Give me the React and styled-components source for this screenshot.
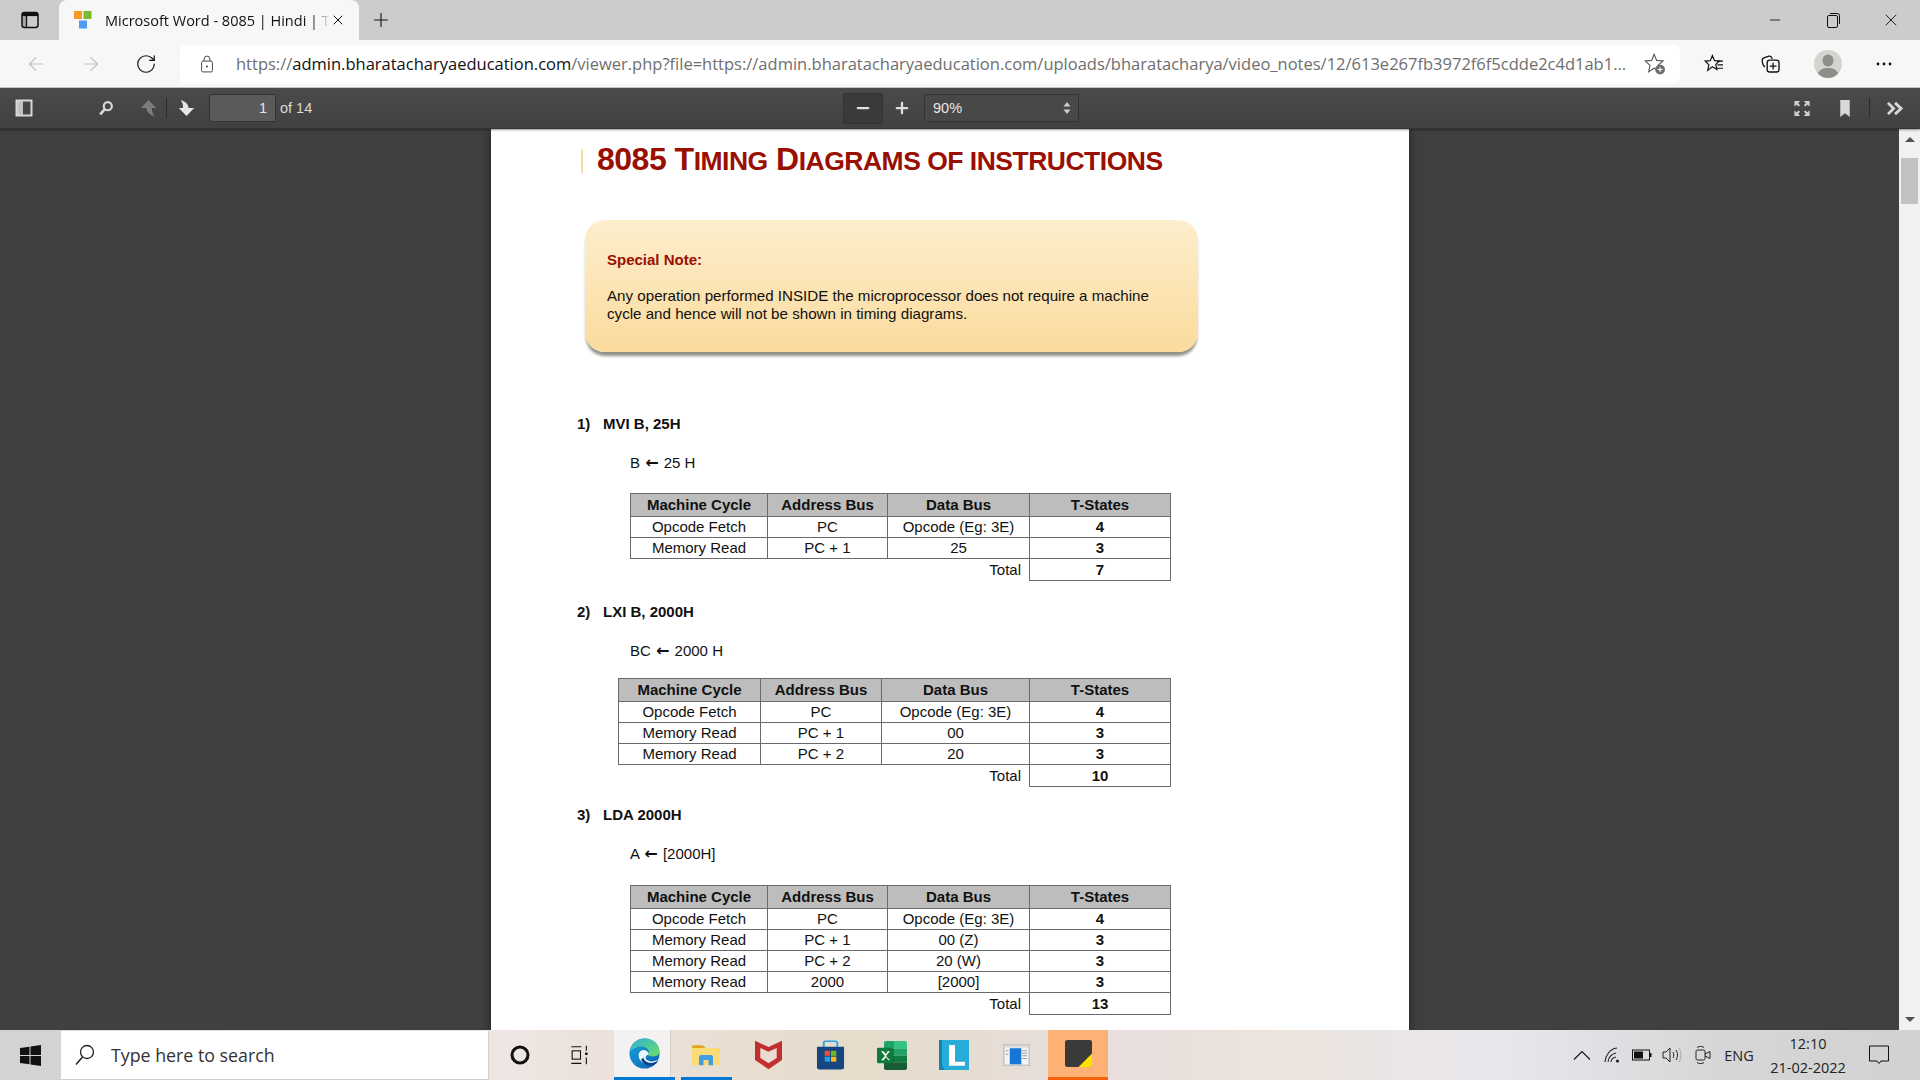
import styled, { createGlobalStyle } from "styled-components"
import { ArrowLeft, ArrowRight, RotateCw, Plus, X, Minus } from "lucide-react"

const sections = [
  {
    num: "1)", name: "MVI B, 25H", left: "B", right: "25 H", top: 63, formulaGap: 21, indent: 53,
    cols: [137, 120, 142, 141],
    rows: [
      ["Opcode Fetch", "PC", "Opcode (Eg: 3E)", "4"],
      ["Memory Read", "PC + 1", "25", "3"],
    ],
    total: "7",
  },
  {
    num: "2)", name: "LXI B, 2000H", left: "BC", right: "2000 H", top: 22, formulaGap: 18, indent: 41,
    cols: [142, 121, 148, 141],
    rows: [
      ["Opcode Fetch", "PC", "Opcode (Eg: 3E)", "4"],
      ["Memory Read", "PC + 1", "00", "3"],
      ["Memory Read", "PC + 2", "20", "3"],
    ],
    total: "10",
  },
  {
    num: "3)", name: "LDA 2000H", left: "A", right: "[2000H]", top: 19, formulaGap: 22, indent: 53,
    cols: [137, 120, 142, 141],
    rows: [
      ["Opcode Fetch", "PC", "Opcode (Eg: 3E)", "4"],
      ["Memory Read", "PC + 1", "00 (Z)", "3"],
      ["Memory Read", "PC + 2", "20 (W)", "3"],
      ["Memory Read", "2000", "[2000]", "3"],
    ],
    total: "13",
  },
]

const Line = ({ d, w = 1.4 }) => <path d={d} fill="none" stroke="currentColor" strokeWidth={w} />

const Favicon = () => (
  <svg width="20" height="20" viewBox="0 0 20 20">
    <rect x="1" y="1" width="8" height="8" fill="#f79a1f" />
    <rect x="10.5" y="1" width="8" height="8" fill="#7cbb2c" />
    <rect x="6" y="10.5" width="8" height="8" fill="#4d9cf0" />
  </svg>
)

const TabsIcon = () => (
  <svg width="20" height="20" viewBox="0 0 20 20">
    <rect x="2" y="2.5" width="16" height="15" rx="2.5" fill="none" stroke="#111" strokeWidth="1.5" />
    <rect x="2" y="2.5" width="16" height="3.6" fill="#111" />
    <rect x="2" y="2.5" width="4.5" height="15" rx="1.5" fill="#111" opacity=".2" />
    <path d="M6.5 6v11" stroke="#111" strokeWidth="1.3" />
  </svg>
)

const LockIcon = () => (
  <svg width="18" height="20" viewBox="0 0 18 24" color="#4a4a4a">
    <rect x="2.5" y="8.5" width="13" height="13" rx="1.5" fill="none" stroke="currentColor" strokeWidth="1.2" />
    <Line d="M5.5 8.5V6a3.5 3.5 0 0 1 7 0v2.5" w={1.2} />
    <circle cx="9" cy="15" r="1.2" fill="currentColor" />
  </svg>
)

const StarAdd = () => (
  <svg width="24" height="24" viewBox="0 0 26 26" color="#555">
    <Line d="M12 2.5l2.8 6.6 7 .6-5.3 4.6 1.6 6.9-6.1-3.6-5.900 3.900 1.500-7L2.500 9.700l7-.6z" w={1.2} />
    <circle cx="18.500" cy="19" r="5.300" fill="#6e6e6e" />
    <path d="M18.500 16.400v5.200M15.900 19h5.200" stroke="#fff" strokeWidth="1.2" />
  </svg>
)

const FavsIcon = () => (
  <svg width="23" height="22" viewBox="0 0 26 26" color="#111">
    <Line d="M10.500 3l2.500 6 6 .5-4.500 4 1.400 6-5.400-3.200L5 20.500l1.400-6.500L2 9.500l6-.5z" w={1.4} />
    <Line d="M16 9.500h7M16.500 14h6.500M16 18h7" w={1.4} />
  </svg>
)

const CollectionsIcon = () => (
  <svg width="22" height="22" viewBox="0 0 26 26" color="#111">
    <Line d="M6 16.500c-1.500-.6-2.600-3-3.200-5.500-.5-2.300-.3-4.500 1.700-5.300l6-2c2-.5 3.300 1 4 3" w={1.5} />
    <rect x="8.500" y="8.500" width="14" height="14" rx="3" fill="#f7f7f7" stroke="currentColor" strokeWidth="1.6" />
    <Line d="M15.500 11.500v8M11.500 15.500h8" w={1.500} />
  </svg>
)

const Avatar = () => (
  <svg width="28" height="28" viewBox="0 0 28 28">
    <circle cx="14" cy="14" r="14" fill="#d4d3cf" />
    <ellipse cx="14" cy="10.500" rx="5.500" ry="6" fill="#8e8d8a" />
    <path d="M4 23.500c1.500-4 5-5.500 10-5.500s8.500 1.500 10 5.500c-2.500 3-6 4.500-10 4.500s-7.500-1.500-10-4.500z" fill="#8e8d8a" />
  </svg>
)

const MoreDots = () => (
  <svg width="18" height="6" viewBox="0 0 18 6" fill="#111">
    <circle cx="3" cy="3" r="1.400" />
    <circle cx="9" cy="3" r="1.400" />
    <circle cx="15" cy="3" r="1.400" />
  </svg>
)

const RestoreIcon = () => (
  <svg width="16" height="18" viewBox="0 0 16 18" color="#111">
    <rect x="2.500" y="4.500" width="10" height="12" rx="1.500" fill="none" stroke="currentColor" />
    <Line d="M5 2.500h7.500a2 2 0 0 1 2 2V13" w={1} />
  </svg>
)

const SidebarToggle = () => (
  <svg width="18" height="18" viewBox="0 0 18 18" color="#d8d8d8">
    <rect x="1.500" y="1.500" width="15" height="15" fill="none" stroke="currentColor" strokeWidth="2" />
    <rect x="2" y="2" width="6" height="14" fill="currentColor" opacity=".85" />
  </svg>
)

const SearchGlass = () => (
  <svg width="18" height="18" viewBox="0 0 18 20" color="#d8d8d8">
    <circle cx="11" cy="8" r="4.500" fill="none" stroke="currentColor" strokeWidth="2.400" />
    <path d="M7.500 11.500L2.500 17" stroke="currentColor" strokeWidth="3" />
  </svg>
)

const PageArrow = ({ up, dim }) => (
  <svg width="19" height="18" viewBox="0 0 20 20" color={dim ? "#7d7d7d" : "#e6e6e6"} transform={up ? "" : "rotate(180)"}>
    <path d="M10 1l8.500 9H14c-.5 3 .3 6 2.500 9-4-1-8-3.500-9-9H1.500z" fill="currentColor" />
  </svg>
)

const FullscreenIcon = () => (
  <svg width="18" height="19" viewBox="0 0 18 20" fill="#cfcfcf">
    <path d="M1 2h6L5 4.500l2 2L5.500 8 3.500 6 1 8zM17 2h-6l2 2.500-2 2L12.500 8l2-2L17 8zM1 18h6l-2-2.500 2-2L5.500 12l-2 2L1 12zM17 18h-6l2-2.500-2-2 1.500-1.500 2 2L17 12z" />
  </svg>
)

const BookmarkIcon = () => (
  <svg width="14" height="19" viewBox="0 0 14 20">
    <path d="M2 1h10v18l-5-4-5 4z" fill="#d8d8d8" />
  </svg>
)

const ChevronsIcon = () => (
  <svg width="20" height="15" viewBox="0 0 20 16" color="#d8d8d8">
    <Line d="M2.500 2l6 6-6 6M10 2l6.500 6-6.500 6" w={3} />
  </svg>
)

const SelectArrows = () => (
  <svg width="8" height="12" viewBox="0 0 8 12" fill="#cfcfcf">
    <path d="M4 0l3.500 4.500h-7zM4 12L.5 7.500h7z" />
  </svg>
)

const WindowsLogo = () => (
  <svg width="21" height="21" viewBox="0 0 21 21" fill="#111">
    <path d="M0 3l9.500-1.300V10H0zM10.500 1.500L21 0v10H10.500zM0 11h9.500v8.300L0 18zM10.500 11H21v10l-10.500-1.500z" />
  </svg>
)

const SearchRing = () => (
  <svg width="22" height="22" viewBox="0 0 22 22" color="#222">
    <circle cx="13" cy="8" r="6.500" fill="none" stroke="currentColor" strokeWidth="1.300" />
    <path d="M8.500 13L2 20.500" stroke="currentColor" strokeWidth="1.500" />
  </svg>
)

const CortanaIcon = () => (
  <svg width="22" height="22" viewBox="0 0 22 22">
    <circle cx="11" cy="11" r="8" fill="none" stroke="#111" strokeWidth="3" />
  </svg>
)

const TaskViewIcon = () => (
  <svg width="21" height="20" viewBox="0 0 24 24" color="#111">
    <Line d="M1 2h12M1 22h12M19 1v6M19 15v8" w={1.300} />
    <rect x="2" y="7" width="10" height="10" fill="none" stroke="currentColor" strokeWidth="1.300" />
    <rect x="17.500" y="9" width="3" height="3" fill="currentColor" />
  </svg>
)

const EdgeIcon = () => (
  <svg width="31" height="31" viewBox="0 0 32 36" preserveAspectRatio="none">
    <defs>
      <linearGradient id="edgeBlue" x1="0" y1="0" x2="1" y2="1">
        <stop offset="0" stopColor="#1aa6dc" />
        <stop offset="1" stopColor="#0a5fb0" />
      </linearGradient>
      <linearGradient id="edgeGreen" x1="0" y1="0" x2="1" y2="1">
        <stop offset="0" stopColor="#2fb4d8" />
        <stop offset="1" stopColor="#6fdc62" />
      </linearGradient>
    </defs>
    <ellipse cx="16" cy="18" rx="15.500" ry="17.500" fill="url(#edgeBlue)" />
    <path d="M2 11C5 3 12 .5 17 .5c8 0 14.500 6.500 14.500 15 0 4-3 6-6.500 6-3 0-5-1-5.500-2.500 1.500-1 1.500-3 .5-5-2-3.500-7-5-11-3.500C6 11.500 3.500 13 2 15z" fill="url(#edgeGreen)" />
    <path d="M20.500 19c-.5-3-3-5-5.500-5-3.500 0-5.500 3.500-5 7.500.5 4 3.500 7.500 8 8.500 5 1 9-1 12-5-3 2-7 3-10 1.500-2.500-1-3.500-3.500-2.500-5 .5-1 1.500-1.500 3-2.500z" fill="#fff" opacity=".92" />
    <path d="M12.500 25c1.500 4.500 5.500 7 10 7 3 0 6-2 7.500-5.500-4 3-9 3-12 1-2-1.500-3-3-3-5z" fill="#0b3f8a" />
  </svg>
)

const FolderIcon = () => (
  <svg width="28" height="23" viewBox="0 0 28 28" preserveAspectRatio="none">
    <path d="M0 3a1.500 1.500 0 0 1 1.500-1.500h9L14 5v2H0z" fill="#e0a526" />
    <rect x="0" y="5" width="28" height="21" rx="1" fill="#fddb74" />
    <path d="M7 26V15.500a2 2 0 0 1 2-2h10a2 2 0 0 1 2 2V26h-4.500v-6.500h-5V26z" fill="#3f9ee6" />
  </svg>
)

const McafeeIcon = () => (
  <svg width="27" height="30" viewBox="0 0 28 36" preserveAspectRatio="none">
    <path d="M0 1l14 7.500L28 1v23L14 35 0 24zM5.500 9.500V21.500L14 28l8.500-6.500V9.500L14 14z" fill="#c32e2e" fillRule="evenodd" />
  </svg>
)

const StoreIcon = () => (
  <svg width="29" height="30" viewBox="0 0 30 36" preserveAspectRatio="none">
    <path d="M8 8V3.500A2 2 0 0 1 10 1.500h10a2 2 0 0 1 2 2V8" fill="none" stroke="#2aa3e6" strokeWidth="2" />
    <path d="M1 8h28v25a2.500 2.500 0 0 1-2.500 2.500h-23A2.500 2.500 0 0 1 1 33z" fill="#15467f" />
    <rect x="9" y="13" width="5.500" height="6" fill="#e9502b" />
    <rect x="15.500" y="13" width="5.500" height="6" fill="#74b62a" />
    <rect x="9" y="20" width="5.500" height="6" fill="#1fa3e8" />
    <rect x="15.500" y="20" width="5.500" height="6" fill="#fbb713" />
  </svg>
)

const ExcelIcon = () => (
  <svg width="30" height="29" viewBox="0 0 30 34" preserveAspectRatio="none">
    <path d="M7 2a2 2 0 0 1 2-2h8v9H7z" fill="#21a366" />
    <path d="M17 0h11a2 2 0 0 1 2 2v7H17z" fill="#33c481" />
    <rect x="7" y="9" width="10" height="8" fill="#107c41" />
    <rect x="17" y="9" width="13" height="8" fill="#21a366" />
    <rect x="7" y="17" width="10" height="8" fill="#185c37" />
    <rect x="17" y="17" width="13" height="8" fill="#107c41" />
    <path d="M7 25h23v7a2 2 0 0 1-2 2H9a2 2 0 0 1-2-2z" fill="#185c37" />
    <rect x="0" y="8" width="16" height="18" rx="1.500" fill="#0f7a3d" />
    <path d="M4 12l4 5.500-4 5h2.500l2.500-3.500 2.500 3.500H13l-4-5 4-5.500h-2.500L9 15.500 6.500 12z" fill="#fff" />
  </svg>
)

const LearnIcon = () => (
  <svg width="30" height="30" viewBox="0 0 30 36" preserveAspectRatio="none">
    <rect width="30" height="36" fill="#27acd9" />
    <path d="M0 0v36h6L3 30V0z" fill="#1583b3" />
    <path d="M10 6h6v20h10v5H10z" fill="#fff" />
  </svg>
)

const WindowAppIcon = () => (
  <svg width="27" height="22" viewBox="0 0 28 26" preserveAspectRatio="none">
    <rect width="28" height="26" rx="1" fill="#d6d6d6" stroke="#a8a8a8" strokeWidth=".8" />
    <rect x="2" y="4" width="24" height="20" fill="#f4f4f4" />
    <rect x="7" y="5" width="12" height="19" fill="#1576d8" />
    <path d="M20 8h5M20 11h5M20 14h5M20 17h5M2.500 8h3M2.500 12h3" stroke="#9a9a9a" strokeWidth="1.200" />
  </svg>
)

const StickyIcon = () => (
  <svg width="27" height="27" viewBox="0 0 28 32" preserveAspectRatio="none">
    <rect width="28" height="32" rx="2.500" fill="#3a3a3a" />
    <path d="M28 16v14a2 2 0 0 1-2 2H14z" fill="#fce100" />
  </svg>
)

const TrayCaret = () => (
  <svg width="18" height="10" viewBox="0 0 18 10" color="#1a1a1a"><Line d="M1 9.500l8-8 8 8" w={1.200} /></svg>
)

const WifiIcon = () => (
  <svg width="16" height="16" viewBox="0 0 16 16" color="#222">
    <Line d="M1 15C1.500 8 6 2 13 1M4 15c.5-4.500 3.500-8 8-9M7 15c.3-2.500 2-4.500 5-5" w={1.100} />
    <circle cx="13.500" cy="14" r="1.600" fill="currentColor" />
  </svg>
)

const BatteryIcon = () => (
  <svg width="20" height="12" viewBox="0 0 20 12" color="#111">
    <rect x=".5" y="1" width="17" height="10" fill="none" stroke="currentColor" />
    <rect x="2" y="2.500" width="9" height="7" fill="currentColor" />
    <rect x="18" y="4" width="1.500" height="4" fill="currentColor" />
  </svg>
)

const VolumeIcon = () => (
  <svg width="20" height="16" viewBox="0 0 20 16" color="#222">
    <Line d="M1 5h3l4-4v14l-4-4H1zM11 5c1 1.500 1 4.500 0 6" w={1} />
    <Line d="M14 3c2 3 2 7 0 10" w={1} />
    <path d="M17 1c2.500 4 2.500 10 0 14" fill="none" stroke="#aaa" />
  </svg>
)

const MeetIcon = () => (
  <svg width="16" height="20" viewBox="0 0 16 20" color="#222">
    <rect x="1" y="5" width="9" height="10" rx="1.500" fill="none" stroke="currentColor" />
    <Line d="M10 9l5-2.500v7L10 11" w={1} />
    <Line d="M2 2.500c2-1.500 5-1.500 7 0M2 17.500c2 1.500 5 1.500 7 0" w={1} />
  </svg>
)

const NotifyIcon = () => (
  <svg width="20" height="20" viewBox="0 0 20 20" color="#111">
    <Line d="M.5 1h19v15H12l-2 2.500L8 16H.5z" w={1} />
  </svg>
)

const Section = ({ data }) => {
  const { num, name, left, right, top, formulaGap, indent, cols, rows, total } = data
  return (
    <>
      <Heading $top={top}>
        <HeadingNum>{num}</HeadingNum>
        {name}
      </Heading>
      <Formula>
        {left} <FormulaArrow>←</FormulaArrow> {right}
      </Formula>
      <Timing $gap={formulaGap} $indent={indent} $width={cols.reduce((a, b) => a + b, 0)}>
        <colgroup>
          {cols.map((w, i) => <col key={i} width={w} />)}
        </colgroup>
        <thead>
          <tr>
            <HeadCell>Machine Cycle</HeadCell>
            <HeadCell>Address Bus</HeadCell>
            <HeadCell>Data Bus</HeadCell>
            <HeadCell>T-States</HeadCell>
          </tr>
        </thead>
        <tbody>
          {rows.map((r, i) => (
            <tr key={i}>
              <Cell>{r[0]}</Cell>
              <Cell>{r[1]}</Cell>
              <Cell>{r[2]}</Cell>
              <Cell $bold>{r[3]}</Cell>
            </tr>
          ))}
          <tr>
            <TotalLabel colSpan={3}>Total</TotalLabel>
            <Cell $bold $tall>{total}</Cell>
          </tr>
        </tbody>
      </Timing>
    </>
  )
}

const App = () => {
  return (
    <Screen>
      <GlobalStyle />
      <TabStrip>
        <TabSide><TabsIcon /></TabSide>
        <Tab>
          <Favicon />
          <TabTitle>Microsoft Word - 8085 | Hindi | T</TabTitle>
          <X size={16} strokeWidth={1.5} color="#111" />
        </Tab>
        <NewTab><Plus size={22} strokeWidth={1.2} color="#111" /></NewTab>
        <WindowControls>
          <WinButton><Minus size={16} strokeWidth={1.3} color="#111" /></WinButton>
          <WinButton><RestoreIcon /></WinButton>
          <WinButton><X size={20} strokeWidth={1.1} color="#111" /></WinButton>
        </WindowControls>
      </TabStrip>

      <AddressBar>
        <NavButton><ArrowLeft size={22} strokeWidth={1.2} color="#bdbdbd" /></NavButton>
        <NavButton><ArrowRight size={22} strokeWidth={1.2} color="#bdbdbd" /></NavButton>
        <NavButton><RotateCw size={22} strokeWidth={1.3} color="#111" /></NavButton>
        <UrlBox>
          <LockIcon />
          <UrlText>
            <UrlMuted>https://</UrlMuted>admin.bharatacharyaeducation.com<UrlMuted>/viewer.php?file=https://admin.bharatacharyaeducation.com/uploads/bharatacharya/video_notes/12/613e267fb3972f6f5cdde2c4d1ab1...</UrlMuted>
          </UrlText>
          <StarAdd />
        </UrlBox>
        <BrowserTools>
          <NavButton><FavsIcon /></NavButton>
          <NavButton><CollectionsIcon /></NavButton>
          <NavButton><Avatar /></NavButton>
          <NavButton><MoreDots /></NavButton>
        </BrowserTools>
      </AddressBar>

      <PdfToolbar>
        <ToolGroup>
          <ToolButton $w={48}><SidebarToggle /></ToolButton>
          <ToolButton $w={34} $ml={41}><SearchGlass /></ToolButton>
          <ToolButton $w={36} $ml={7}><PageArrow up dim /></ToolButton>
          <ToolSep />
          <ToolButton $w={36} $ml={1}><PageArrow /></ToolButton>
          <PageInput>1</PageInput>
          <PageCount>of 14</PageCount>
        </ToolGroup>
        <ToolGroup>
          <ZoomOut><Minus size={18} strokeWidth={3} color="#e0e0e0" /></ZoomOut>
          <ToolButton $w={38}><Plus size={18} strokeWidth={3} color="#e0e0e0" /></ToolButton>
          <ZoomSelect>90%<SelectArrows /></ZoomSelect>
        </ToolGroup>
        <ToolGroup>
          <ToolButton $w={40}><FullscreenIcon /></ToolButton>
          <ToolButton $w={40} $ml={3}><BookmarkIcon /></ToolButton>
          <ToolSep $ml={4} />
          <ToolButton $w={40} $ml={5}><ChevronsIcon /></ToolButton>
        </ToolGroup>
      </PdfToolbar>

      <Viewer>
        <PageArea>
          <Page>
            <TitleRow>
              <TitleBar />
              <Title>
                8085 T<TitleSmall>IMING</TitleSmall> D<TitleSmall>IAGRAMS OF INSTRUCTIONS</TitleSmall>
              </Title>
            </TitleRow>
            <NoteBox>
              <NoteLabel>Special Note:</NoteLabel>
              <NoteBody>
                Any operation performed INSIDE the microprocessor does not require a machine cycle and hence will not be shown in timing diagrams.
              </NoteBody>
            </NoteBox>
            {sections.map((s) => <Section key={s.num} data={s} />)}
          </Page>
        </PageArea>
        <Scrollbar>
          <ScrollArrow><ArrowUpTri /></ScrollArrow>
          <ScrollThumb />
          <ScrollArrow $end><ArrowDownTri /></ScrollArrow>
        </Scrollbar>
      </Viewer>

      <Taskbar>
        <StartButton><WindowsLogo /></StartButton>
        <SearchBox>
          <SearchRing />
          <SearchHint>Type here to search</SearchHint>
        </SearchBox>
        <TaskButton $w={61}><CortanaIcon /></TaskButton>
        <TaskButton $w={61}><TaskViewIcon /></TaskButton>
        <EdgeButton><EdgeIcon /></EdgeButton>
        <TaskButton $w={62} $running><FolderIcon /></TaskButton>
        <TaskButton><McafeeIcon /></TaskButton>
        <TaskButton><StoreIcon /></TaskButton>
        <TaskButton><ExcelIcon /></TaskButton>
        <TaskButton><LearnIcon /></TaskButton>
        <TaskButton><WindowAppIcon /></TaskButton>
        <StickyButton><StickyIcon /></StickyButton>
        <Tray>
          <TrayItem $w={30}><TrayCaret /></TrayItem>
          <TrayItem $w={30}><WifiIcon /></TrayItem>
          <TrayItem $w={30}><BatteryIcon /></TrayItem>
          <TrayItem $w={30}><VolumeIcon /></TrayItem>
          <TrayItem $w={31}><MeetIcon /></TrayItem>
          <TrayItem $w={42}><TrayText>ENG</TrayText></TrayItem>
          <Clock>
            <TrayText>12:10</TrayText>
            <TrayText>21-02-2022</TrayText>
          </Clock>
          <TrayItem $w={46}><NotifyIcon /></TrayItem>
        </Tray>
      </Taskbar>
    </Screen>
  )
}

export default App

const GlobalStyle = createGlobalStyle`
  html, body {
    margin: 0;
    padding: 0;
    height: 100%;
    overflow: hidden;
    background: #404040;
  }
  * {
    box-sizing: border-box;
  }
`

const Screen = styled.div`
  width: 1920px;
  height: 1080px;
  display: flex;
  flex-direction: column;
  overflow: hidden;
  font-family: "Open Sans", "Liberation Sans", sans-serif;
`

const TabStrip = styled.div`
  height: 40px;
  flex: none;
  display: flex;
  background: #cccccc;
`

const TabSide = styled.div`
  width: 59px;
  display: flex;
  align-items: center;
  justify-content: center;
`

const Tab = styled.div`
  width: 300px;
  height: 40px;
  display: flex;
  align-items: center;
  padding: 0 13px 0 14px;
  background: #f7f7f7;
  border-radius: 8px 8px 0 0;
`

const TabTitle = styled.div`
  flex: 1;
  margin-left: 12px;
  font-size: 14.5px;
  color: #111;
  white-space: nowrap;
  -webkit-mask-image: linear-gradient(to right, #000 92%, transparent 100%);
`

const NewTab = styled.div`
  width: 44px;
  display: flex;
  align-items: center;
  justify-content: center;
`

const WindowControls = styled.div`
  margin-left: auto;
  display: flex;
`

const WinButton = styled.div`
  width: 58px;
  display: flex;
  align-items: center;
  justify-content: center;
`

const AddressBar = styled.div`
  height: 48px;
  flex: none;
  display: flex;
  align-items: center;
  padding-left: 8px;
  background: #f7f7f7;
  border-bottom: 1px solid #c8c8c8;
`

const NavButton = styled.div`
  width: 55px;
  height: 38px;
  flex: none;
  display: flex;
  align-items: center;
  justify-content: center;
`

const UrlBox = styled.div`
  width: 1500px;
  height: 38px;
  margin-left: 7px;
  padding: 0 13px 0 18px;
  display: flex;
  align-items: center;
  background: #fff;
  border-radius: 5px;
`

const UrlText = styled.div`
  flex: 1;
  margin-left: 20px;
  font-size: 16.5px;
  color: #111;
  white-space: nowrap;
  overflow: hidden;
`

const UrlMuted = styled.span`
  color: #6e6e6e;
`

const BrowserTools = styled.div`
  display: flex;
  gap: 1.5px;
  margin-left: 7px;
`

const PdfToolbar = styled.div`
  height: 41px;
  flex: none;
  display: grid;
  grid-template-columns: 843px 1fr auto;
  align-items: center;
  padding-right: 5px;
  background: linear-gradient(#4a4a4a, #414141);
  border-bottom: 1px solid #333;
  box-shadow: 0 1px 2px rgba(0, 0, 0, 0.4);
  position: relative;
  color: #d9d9d9;
  font-family: "Liberation Sans", Arial, sans-serif;
`

const ToolGroup = styled.div`
  display: flex;
  align-items: center;
`

const ToolButton = styled.div`
  width: ${(p) => p.$w}px;
  height: 30px;
  margin-left: ${(p) => p.$ml || 0}px;
  display: flex;
  align-items: center;
  justify-content: center;
`

const ToolSep = styled.div`
  width: 1px;
  height: 20px;
  margin-left: ${(p) => p.$ml || 0}px;
  background: #2b2b2b;
`

const PageInput = styled.div`
  width: 67px;
  height: 28px;
  margin-left: 5px;
  padding-right: 8px;
  display: flex;
  align-items: center;
  justify-content: flex-end;
  font-size: 14.5px;
  color: #e6e6e6;
  background: #5a5a5a;
  border: 1px solid #333;
  border-radius: 2px;
`

const PageCount = styled.div`
  margin-left: 4px;
  font-size: 14.5px;
`

const ZoomOut = styled.div`
  width: 40px;
  height: 31px;
  display: flex;
  align-items: center;
  justify-content: center;
  background: #3a3a3a;
  border: 1px solid #333;
  border-radius: 2px;
`

const ZoomSelect = styled.div`
  width: 155px;
  height: 28px;
  margin-left: 3px;
  padding: 0 7px 0 8px;
  display: flex;
  align-items: center;
  justify-content: space-between;
  font-size: 14.5px;
  color: #e6e6e6;
  background: #484848;
  border: 1px solid #333;
  border-radius: 2px;
`

const Viewer = styled.div`
  flex: 1;
  min-height: 0;
  display: flex;
  background: #404040;
`

const PageArea = styled.div`
  flex: 1;
  min-width: 0;
  display: flex;
  justify-content: center;
  overflow: hidden;
`

const Page = styled.div`
  width: 918px;
  height: 1200px;
  margin-left: 1px;
  padding: 20px 0 0 86px;
  background: #fff;
  box-shadow: 0 0 10px rgba(0, 0, 0, 0.55);
  font-family: "Liberation Sans", Arial, sans-serif;
  color: #111;
`

const TitleRow = styled.div`
  height: 24px;
  margin-left: 4px;
  display: flex;
  align-items: center;
  gap: 14px;
`

const TitleBar = styled.div`
  width: 2px;
  height: 24px;
  background: #fbd9a5;
`

const Title = styled.h1`
  margin: -2px 0 0;
  font-size: 32px;
  font-weight: 700;
  line-height: 24px;
  letter-spacing: -0.5px;
  white-space: nowrap;
  color: #990f02;
`

const TitleSmall = styled.span`
  font-size: 26.5px;
`

const NoteBox = styled.div`
  width: 613px;
  height: 132px;
  margin: 47px 0 0 8px;
  padding: 31px 30px 0 22px;
  background: linear-gradient(#fdeecd, #fbdb9d);
  border-radius: 20px;
  box-shadow: 0 5px 3px -1px rgba(70, 70, 60, 0.6);
`

const NoteLabel = styled.div`
  font-size: 15px;
  font-weight: 700;
  line-height: 18px;
  color: #990f02;
`

const NoteBody = styled.p`
  margin: 18px 0 0;
  font-size: 15.15px;
  line-height: 18px;
  color: #111;
`

const Heading = styled.div`
  margin-top: ${(p) => p.$top}px;
  display: flex;
  font-size: 15px;
  font-weight: 700;
  line-height: 18px;
`

const HeadingNum = styled.span`
  width: 26px;
`

const Formula = styled.div`
  margin: 21px 0 0 53px;
  font-size: 15px;
  line-height: 18px;
`

const FormulaArrow = styled.span`
  margin: 0 1px;
  font-family: "DejaVu Sans", sans-serif;
  font-size: 16px;
  font-weight: 700;
  line-height: 1;
`

const Timing = styled.table`
  width: ${(p) => p.$width}px;
  margin: ${(p) => p.$gap}px 0 0 ${(p) => p.$indent}px;
  border-collapse: collapse;
  table-layout: fixed;
  font-size: 15px;
`

const HeadCell = styled.th`
  height: 23px;
  padding: 0;
  border: 1px solid #6a6a6a;
  background: #bdbdbd;
  font-weight: 700;
  text-align: center;
  line-height: 18px;
`

const Cell = styled.td`
  height: ${(p) => (p.$tall ? 22 : 21)}px;
  padding: 0;
  border: 1px solid #6a6a6a;
  font-weight: ${(p) => (p.$bold ? 700 : 400)};
  text-align: center;
  line-height: 18px;
`

const TotalLabel = styled.td`
  padding: 0 8px 0 0;
  text-align: right;
  line-height: 18px;
`

const Scrollbar = styled.div`
  width: 21px;
  flex: none;
  display: flex;
  flex-direction: column;
  align-items: center;
  background: #f1f1f1;
`

const ScrollArrow = styled.div`
  width: 21px;
  height: 21px;
  flex: none;
  margin-top: ${(p) => (p.$end ? "auto" : 0)};
  display: flex;
  align-items: center;
  justify-content: center;
`

const ArrowUpTri = styled.div`
  border-left: 5px solid transparent;
  border-right: 5px solid transparent;
  border-bottom: 5px solid #505050;
`

const ArrowDownTri = styled.div`
  border-left: 5px solid transparent;
  border-right: 5px solid transparent;
  border-top: 5px solid #505050;
`

const ScrollThumb = styled.div`
  width: 17px;
  height: 46px;
  margin-top: 8px;
  background: #c1c1c1;
`

const Taskbar = styled.div`
  height: 50px;
  flex: none;
  display: flex;
  background: linear-gradient(to right, #d6d6d6 0, #efe5e3 26%, #ebe1d9 33%, #e5dccb 45%, #e8dedd 58%, #ece4dc 66%, #e9e7ee 78%, #d6d6d6 90%, #d2d2d2 100%);
`

const StartButton = styled.div`
  width: 61px;
  display: flex;
  align-items: center;
  justify-content: center;
  background: #d3d3d3;
`

const SearchBox = styled.div`
  width: 428px;
  margin-top: 1px;
  padding-left: 13px;
  display: flex;
  align-items: center;
  gap: 15px;
  background: #fff;
  border-right: 1px solid #cfcfcf;
  border-bottom: 1px solid #cfcfcf;
`

const SearchHint = styled.span`
  font-size: 17.8px;
  color: #333;
`

const TaskButton = styled.div`
  width: ${(p) => p.$w || 62}px;
  flex: none;
  display: flex;
  align-items: center;
  justify-content: center;
  background: ${(p) => (p.$running ? "linear-gradient(#0078d4, #0078d4) center bottom / 51px 3px no-repeat" : "transparent")};
`

const EdgeButton = styled.div`
  width: 61px;
  margin-left: 3px;
  flex: none;
  display: flex;
  align-items: center;
  justify-content: center;
  background: linear-gradient(to right, #f4f2f0 56px, #d8d0c4 56px, #d8d0c4 57px, transparent 57px);
  border-bottom: 3px solid #0078d4;
`

const StickyButton = styled.div`
  width: 60px;
  margin-left: 1px;
  flex: none;
  display: flex;
  align-items: center;
  justify-content: center;
  background: #fdb175;
  border-bottom: 3px solid #f7630c;
`

const Tray = styled.div`
  margin-left: auto;
  padding-right: 18px;
  display: flex;
  align-items: center;
`

const TrayItem = styled.div`
  width: ${(p) => p.$w}px;
  display: flex;
  align-items: center;
  justify-content: center;
`

const TrayText = styled.span`
  font-size: 14.5px;
  color: #222;
  white-space: nowrap;
`

const Clock = styled.div`
  width: 96px;
  display: flex;
  flex-direction: column;
  align-items: center;
  gap: 5px;
  line-height: 19px;
`
